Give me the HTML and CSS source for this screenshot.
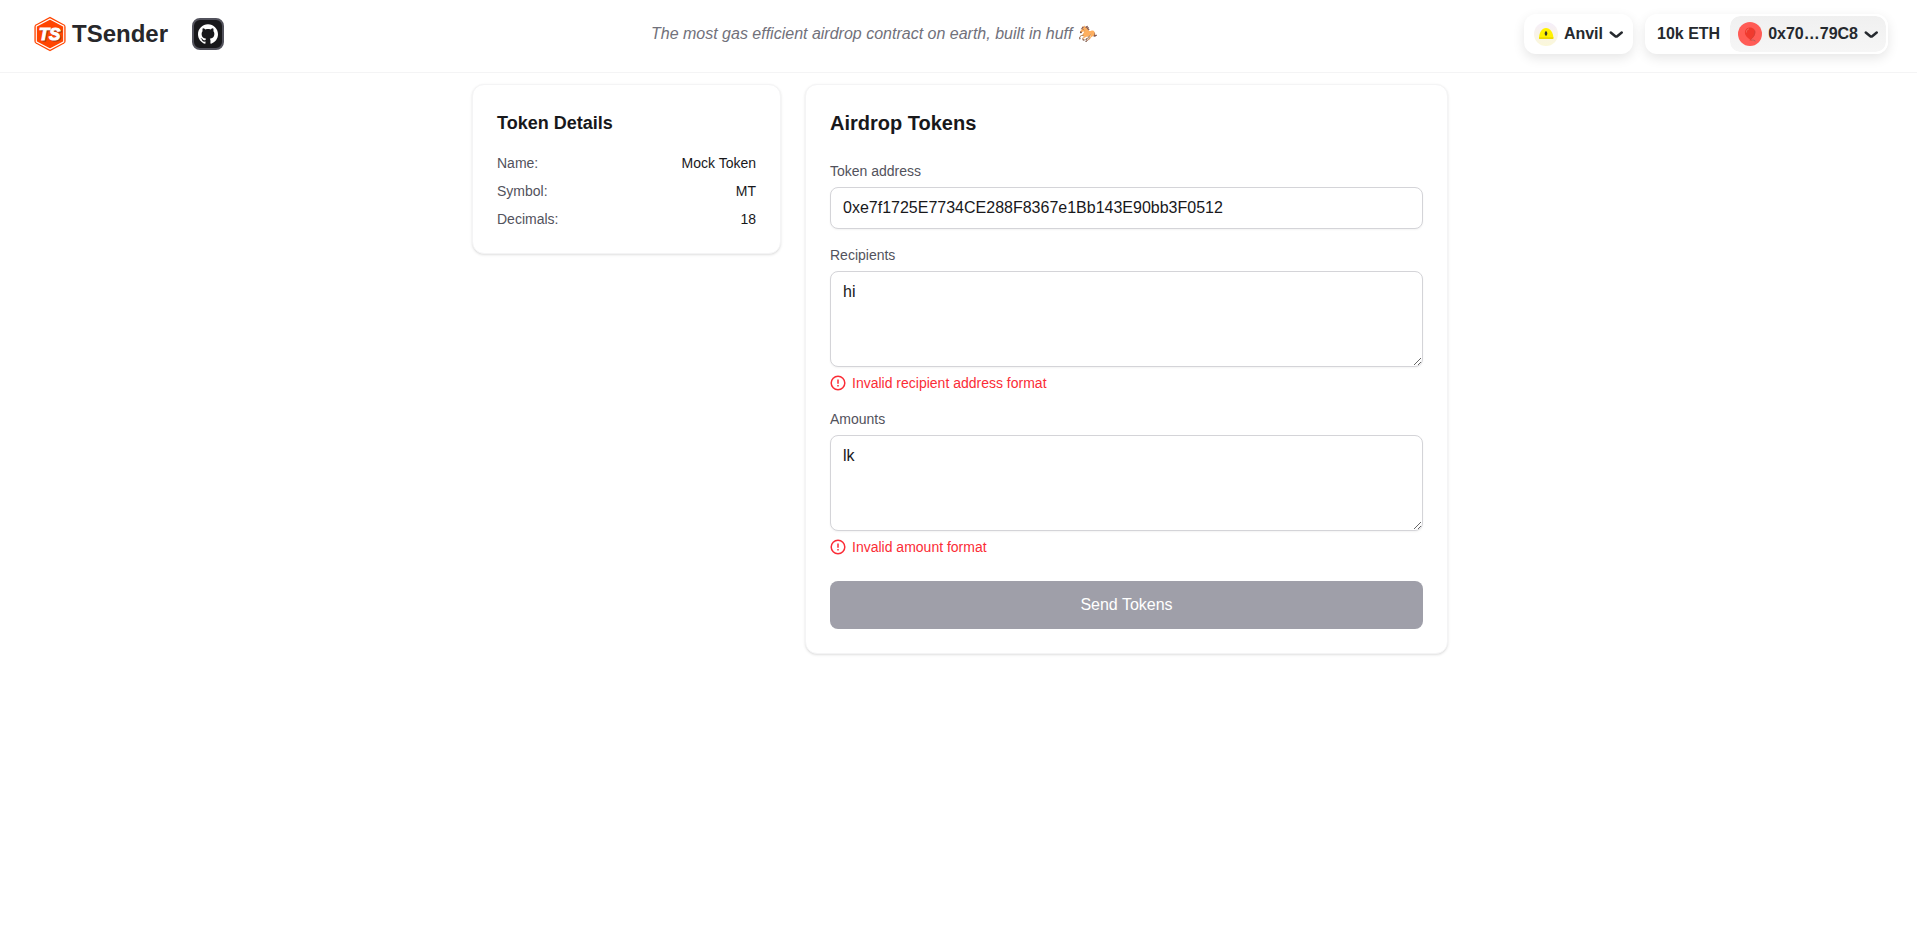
FILE: index.html
```html
<!DOCTYPE html>
<html lang="en">
<head>
<meta charset="utf-8">
<meta name="viewport" content="width=device-width, initial-scale=1">
<title>TSender</title>
<link rel="stylesheet" href="styles.css">
</head>
<body>
<header class="site-header">
  <div class="brand-group">
    <a class="brand" href="#">
      <svg class="brand-logo" viewBox="0 0 36 36" aria-hidden="true">
        <path d="M18 .8 32.2 8.4Q33.600 9.200 33.600 11V25Q33.600 26.800 32.200 27.600L18 35.200 3.800 27.600Q2.400 26.800 2.400 25V11Q2.400 9.200 3.800 8.400Z" fill="#ff4500"/>
        <path d="M18 2.900 31.700 10.200V25.800L18 33.100 4.300 25.800V10.200Z" fill="none" stroke="#fff" stroke-width="1.100"/>
        <text class="logo-shade" x="18.600" y="24.800">TS</text>
        <text class="logo-text" x="17.500" y="23.900">TS</text>
      </svg>
      <h1 class="brand-name">TSender</h1>
    </a>
    <a class="github" href="#" aria-label="GitHub">
      <svg viewBox="0 0 24 24" width="20" height="20" aria-hidden="true"><path fill="#fff" d="M12 .297c-6.63 0-12 5.373-12 12 0 5.303 3.438 9.8 8.205 11.385.6.113.82-.258.82-.577 0-.285-.01-1.04-.015-2.04-3.338.724-4.042-1.61-4.042-1.61C4.422 18.07 3.633 17.7 3.633 17.7c-1.087-.744.084-.729.084-.729 1.205.084 1.838 1.236 1.838 1.236 1.07 1.835 2.809 1.305 3.495.998.108-.776.417-1.305.76-1.605-2.665-.3-5.466-1.332-5.466-5.93 0-1.31.465-2.38 1.235-3.22-.135-.303-.54-1.523.105-3.176 0 0 1.005-.322 3.3 1.23.96-.267 1.98-.399 3-.405 1.02.006 2.04.138 3 .405 2.28-1.552 3.285-1.23 3.285-1.23.645 1.653.24 2.873.12 3.176.765.84 1.23 1.91 1.23 3.22 0 4.61-2.805 5.625-5.475 5.92.42.36.81 1.096.81 2.22 0 1.606-.015 2.896-.015 3.286 0 .315.21.69.825.57C20.565 22.092 24 17.592 24 12.297c0-6.627-5.373-12-12-12"/></svg>
    </a>
  </div>
  <p class="tagline">The most gas efficient airdrop contract on earth, built in huff 🐎</p>
  <div class="wallet">
    <button class="chain" type="button">
      <svg width="24" height="24" viewBox="0 0 24 24" aria-hidden="true">
        <defs><linearGradient id="chain-bg" x1="0" y1="0" x2="0" y2="1"><stop offset="0" stop-color="#f5eefb"/><stop offset="1" stop-color="#fbf8d8"/></linearGradient></defs>
        <circle cx="12" cy="12" r="12" fill="url(#chain-bg)"/>
        <path d="M5 16.2C5 10.8 8 6 12 6s7.400 4.800 7.400 10.200q0 .8-.9.8H6q-1 0-1-.8Z" fill="#fff100"/>
        <path d="M5 15.300h14.400v.9q0 .8-.9.8H6q-1 0-1-.8Z" fill="#ecd900"/>
        <ellipse cx="12" cy="11.500" rx="1.300" ry="2.300" fill="#33332a"/>
      </svg>
      <span>Anvil</span>
      <svg class="chevron" width="14" height="7" viewBox="0 0 14 7" aria-hidden="true"><path d="M12.750 1.540 8.516 5.004C7.780 5.607 6.720 5.607 5.984 5.004L1.750 1.540"/></svg>
    </button>
    <button class="account" type="button">
      <span class="balance">10k ETH</span>
      <span class="address">
        <svg width="24" height="24" viewBox="0 0 24 24" aria-hidden="true">
          <circle cx="12" cy="12" r="12" fill="#ff5c56"/>
          <path d="M13 18c1.500.2 4.600-.2 4.200 1.600" fill="none" stroke="#a8615b" stroke-width=".8"/>
          <path d="M12 5.400c3.300 0 5.400 2.400 5.200 5.300-.2 3.200-2.400 5.300-4.200 6.600l.7 1.200h-2.200l.4-1.300C9.400 16 6.900 13.500 6.900 10.500c0-2.900 2.100-5.100 5.100-5.100Z" fill="#f03a2e"/>
          <path d="M8.300 10.500c0-1.900 1-3.300 2.700-3.700" fill="none" stroke="#f26a5e" stroke-width="1"/>
          <path d="M16.800 8.500c.8 3.600-1.400 6.600-4 8.700" fill="none" stroke="#c9443c" stroke-width=".7"/>
        </svg>
        <span>0x70…79C8</span>
        <svg class="chevron" width="14" height="7" viewBox="0 0 14 7" aria-hidden="true"><path d="M12.750 1.540 8.516 5.004C7.780 5.607 6.720 5.607 5.984 5.004L1.750 1.540"/></svg>
      </span>
    </button>
  </div>
</header>

<main class="content">
  <section class="card">
    <h2 class="details-title">Token Details</h2>
    <dl class="details">
      <div class="detail"><dt>Name:</dt><dd>Mock Token</dd></div>
      <div class="detail"><dt>Symbol:</dt><dd>MT</dd></div>
      <div class="detail"><dt>Decimals:</dt><dd>18</dd></div>
    </dl>
  </section>

  <form class="card">
    <h2 class="form-title">Airdrop Tokens</h2>
    <div class="fields">
      <div class="field">
        <label for="token">Token address</label>
        <input class="control" id="token" type="text" value="0xe7f1725E7734CE288F8367e1Bb143E90bb3F0512">
      </div>
      <div class="field">
        <label for="recipients">Recipients</label>
        <textarea class="control area" id="recipients" aria-describedby="recipients-error">hi</textarea>
        <p class="error" id="recipients-error">
          <svg class="error-icon" viewBox="0 0 16 16" aria-hidden="true"><circle cx="8" cy="8" r="6.800"/><path d="M8 4.600v4.100M8 10v1.500"/></svg>
          Invalid recipient address format
        </p>
      </div>
      <div class="field">
        <label for="amounts">Amounts</label>
        <textarea class="control area" id="amounts" aria-describedby="amounts-error">lk</textarea>
        <p class="error" id="amounts-error">
          <svg class="error-icon" viewBox="0 0 16 16" aria-hidden="true"><circle cx="8" cy="8" r="6.800"/><path d="M8 4.600v4.100M8 10v1.500"/></svg>
          Invalid amount format
        </p>
      </div>
    </div>
    <button class="submit" type="submit" disabled>Send Tokens</button>
  </form>
</main>
</body>
</html>
```

FILE: styles.css
```css
* {
  box-sizing: border-box;
}

body {
  margin: 0;
  background: #fff;
  color: #18181b;
  font: 16px/24px "Liberation Sans", Arial, sans-serif;
}

h1, h2, p, dl, dd {
  margin: 0;
}

button, input, textarea {
  font: inherit;
  color: inherit;
}

svg {
  display: block;
  flex: none;
}

.site-header {
  display: flex;
  justify-content: space-between;
  align-items: center;
  padding: 14px 29px 18px 32px;
  border-bottom: 1px solid #f4f4f5;
}

.brand-group {
  display: flex;
  align-items: center;
  gap: 24px;
}

.brand {
  display: flex;
  align-items: center;
  gap: 4px;
  color: #27272a;
  text-decoration: none;
}

.brand-logo {
  width: 36px;
  height: 36px;
}

.logo-text,
.logo-shade {
  font: italic 900 17px "Liberation Sans", Arial, sans-serif;
  text-anchor: middle;
  stroke-width: 1px;
}

.logo-text {
  fill: #fff;
  stroke: #fff;
}

.logo-shade {
  fill: #a33a18;
  stroke: #a33a18;
}

.brand-name {
  font-size: 24px;
  line-height: 32px;
}

.github {
  display: grid;
  place-items: center;
  width: 32px;
  height: 32px;
  border: 2px solid #52525c;
  border-radius: 8px;
  background: #18181b;
}

.tagline {
  color: #71717b;
  font-style: italic;
}

.wallet {
  display: flex;
  gap: 12px;
  color: #25292e;
  font-weight: 700;
}

.chain,
.account {
  display: flex;
  align-items: center;
  height: 40px;
  border: 0;
  border-radius: 12px;
  background: #fff;
  box-shadow: 0 4px 12px rgba(0, 0, 0, 0.1);
}

.chain {
  gap: 6px;
  padding: 8px 10px;
}

.account {
  padding: 0;
}

.balance {
  padding: 8px 8px 8px 12px;
}

.address {
  display: flex;
  align-items: center;
  gap: 6px;
  padding: 4px 8px;
  border: 2px solid #fff;
  border-radius: 12px;
  background: linear-gradient(#f0f0f0, #f6f6f6) padding-box;
  height: 40px;
}

.chevron {
  fill: none;
  stroke: currentColor;
  stroke-width: 2.5px;
  stroke-linecap: round;
  stroke-linejoin: round;
  overflow: visible;
}

.content {
  display: grid;
  grid-template-columns: minmax(0, 309px) minmax(0, 643px);
  justify-content: center;
  align-items: start;
  gap: 24px;
  padding: 11px 0 24px 3px;
}

.card {
  padding: 24px;
  border: 1px solid #f4f4f5;
  border-radius: 12px;
  background: #fff;
  box-shadow: 0 1px 3px rgba(0, 0, 0, 0.1), 0 1px 2px -1px rgba(0, 0, 0, 0.1);
}

.details-title {
  margin-bottom: 16px;
  font-size: 18px;
  line-height: 28px;
}

.details {
  display: grid;
  gap: 8px;
  font-size: 14px;
  line-height: 20px;
}

.detail {
  display: flex;
  justify-content: space-between;
}

.detail dt {
  color: #52525c;
}

.form-title {
  margin-bottom: 24px;
  font-size: 20px;
  line-height: 28px;
}

.fields {
  display: grid;
  gap: 16px;
}

.field {
  display: grid;
  gap: 6px;
}

.field label {
  color: #52525c;
  font-size: 14px;
  line-height: 20px;
}

.control {
  display: block;
  width: 100%;
  height: 42px;
  padding: 8px 12px;
  border: 1px solid #d4d4d8;
  border-radius: 8px;
  background: #fff;
  box-shadow: 0 1px 2px rgba(0, 0, 0, 0.05);
}

.area {
  height: 96px;
  resize: vertical;
}

.error {
  display: flex;
  align-items: center;
  gap: 6px;
  color: #fb2c36;
  font-size: 14px;
  line-height: 20px;
}

.error-icon {
  width: 16px;
  height: 16px;
  fill: none;
  stroke: currentColor;
  stroke-width: 1.5px;
}

.submit {
  display: block;
  width: 100%;
  height: 48px;
  margin-top: 24px;
  border: 0;
  border-radius: 8px;
  background: #9f9fa9;
  color: #fff;
}
```
